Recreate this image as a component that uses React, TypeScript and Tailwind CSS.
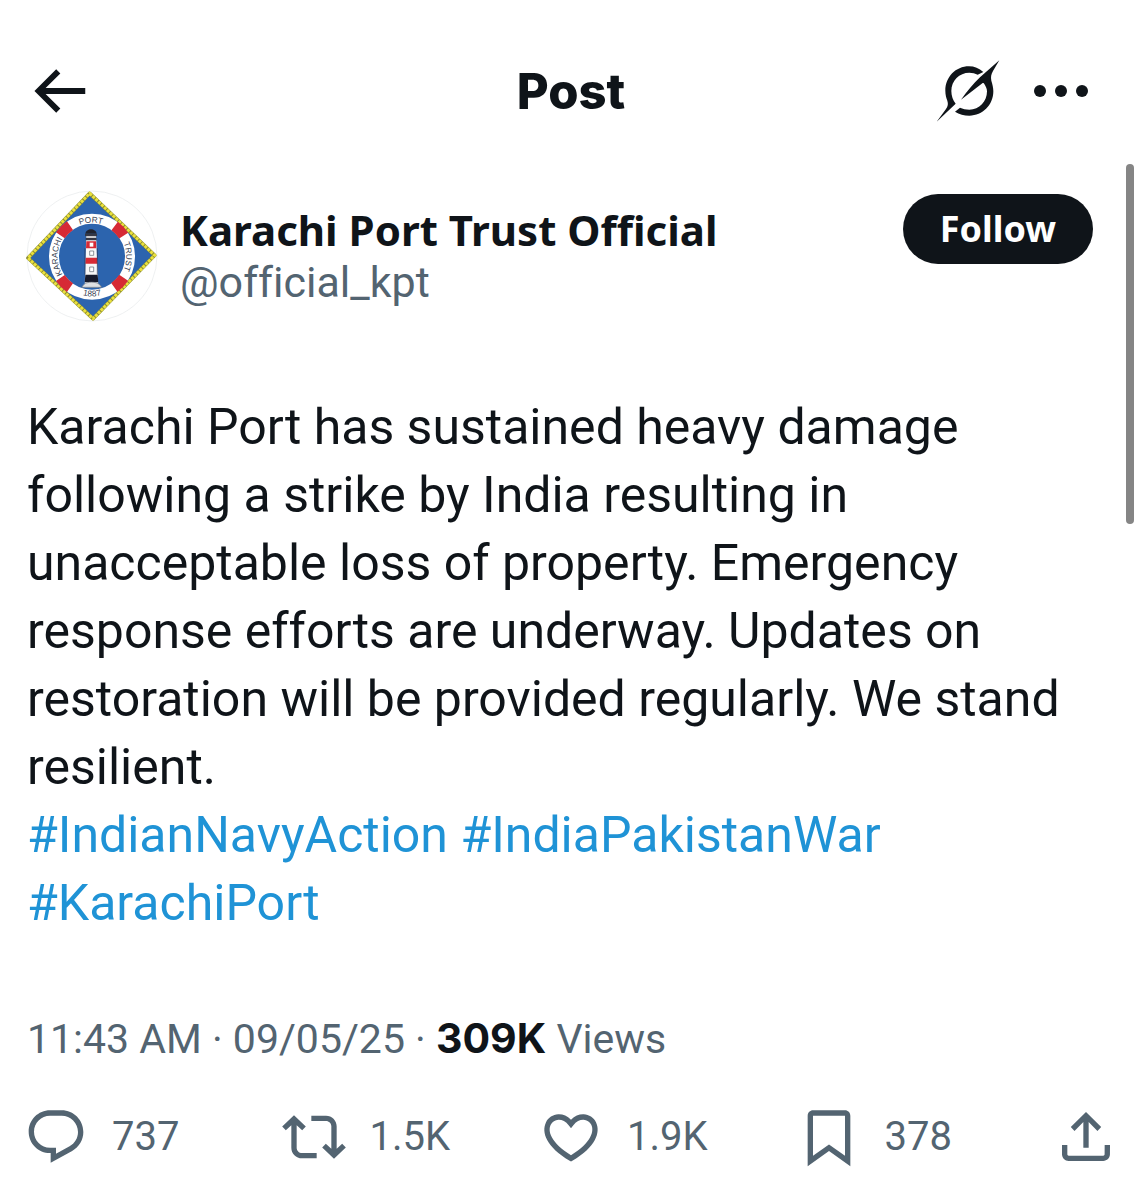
import type { ReactNode } from "react";

const icons = {
  back: "M7.414 13l5.043 5.04-1.414 1.42L3.586 12l7.457-7.46 1.414 1.42L7.414 11H21v2H7.414z",
  reply:
    "M1.751 10c0-4.42 3.584-8 8.005-8h4.366c4.49 0 8.129 3.64 8.129 8.13 0 2.96-1.607 5.68-4.196 7.11l-8.054 4.46v-3.69h-.067c-4.49.1-8.183-3.51-8.183-8.01zm8.005-6c-3.317 0-6.005 2.69-6.005 6 0 3.37 2.77 6.08 6.138 6.01l.351-.01h1.761v2.3l5.087-2.81c1.951-1.08 3.163-3.13 3.163-5.36 0-3.39-2.744-6.13-6.129-6.13H9.756z",
  repost:
    "M4.5 3.88l4.432 4.14-1.364 1.46L5.5 7.55V16c0 1.1.896 2 2 2H13v2H7.5c-2.209 0-4-1.79-4-4V7.55L1.432 9.48.068 8.02 4.5 3.88zM16.5 6H11V4h5.5c2.209 0 4 1.79 4 4v8.45l2.068-1.93 1.364 1.46-4.432 4.14-4.432-4.14 1.364-1.46 2.068 1.93V8c0-1.1-.896-2-2-2z",
  like: "M16.697 5.5c-1.222-.06-2.679.51-3.89 2.16l-.805 1.09-.806-1.09C9.984 6.01 8.526 5.44 7.304 5.5c-1.243.07-2.349.78-2.91 1.91-.552 1.12-.633 2.78.479 4.82 1.074 1.97 3.257 4.27 7.129 6.61 3.87-2.34 6.052-4.64 7.126-6.61 1.111-2.04 1.03-3.7.477-4.82-.561-1.13-1.666-1.84-2.908-1.91zm4.187 7.69c-1.351 2.48-4.001 5.12-8.379 7.67l-.503.3-.504-.3c-4.379-2.55-7.029-5.19-8.382-7.67-1.36-2.5-1.41-4.86-.514-6.67.887-1.79 2.647-2.91 4.601-3.01 1.651-.09 3.368.56 4.798 2.01 1.429-1.45 3.146-2.1 4.796-2.01 1.954.1 3.714 1.22 4.601 3.01.896 1.81.846 4.17-.514 6.67z",
  bookmark:
    "M4 4c0-1.1.9-2 2-2h12c1.1 0 2 .9 2 2v18.94l-8-5.71-8 5.71V4zM6 4v15.06l6-4.29 6 4.29V4H6z",
  share:
    "M12 2.59l5.7 5.7-1.41 1.42L13 6.41V16h-2V6.41l-3.3 3.3-1.41-1.42L12 2.59zM21 15l-.02 3.51c0 1.38-1.12 2.49-2.5 2.49H5.5C4.11 21 3 19.88 3 18.5V15h2v3.5c0 .28.22.5.5.5h12.98c.28 0 .5-.22.5-.5L19 15h2z",
};

const actions = [
  { label: "Reply", icon: icons.reply, count: "737" },
  { label: "Repost", icon: icons.repost, count: "1.5K" },
  { label: "Like", icon: icons.like, count: "1.9K" },
  { label: "Bookmark", icon: icons.bookmark, count: "378" },
];

const hashtags = ["#IndianNavyAction", "#IndiaPakistanWar", "#KarachiPort"];

function Icon({ path, className }: { path: string; className: string }) {
  return (
    <svg viewBox="0 0 24 24" fill="currentColor" className={className} aria-hidden="true">
      <path d={path} />
    </svg>
  );
}

function GrokIcon() {
  return (
    <svg viewBox="48 26 192 192" fill="currentColor" className="size-16" aria-hidden="true">
      <path d="M190 65C177 54 163 48 147 48C107 48 76 80 76 121C76 134 79 143 82 151C85 160 84 167 78 176L50 214L107 160C99 150 94 137 94 122C94 91 118 67 148 67C157 67 166 69 173 73Z" />
      <path d="M238 30L180 81C160 101 141 122 123 148L188 98C190 97 192 98 193 101C197 108 201 114 201 123C201 154 178 178 148 178C138 178 128 175 120 172L105 184C118 192 132 196 148 196C188 196 220 164 220 123C220 112 217 101 214 91C212 80 213 73 219 62Z" />
    </svg>
  );
}

function Avatar() {
  return (
    <svg viewBox="30 30 396 396" className="size-[132px] shrink-0" role="img" aria-label="Karachi Port Trust">
      <defs>
        <path id="arc-top" d="M126 230A102 102 0 0 1 330 230" />
        <path id="arc-left" d="M228 333A103 103 0 0 1 228 127" />
        <path id="arc-right" d="M228 127A103 103 0 0 1 228 333" />
        <path id="arc-bottom" d="M109 230A119 119 0 0 0 347 230" />
      </defs>
      <circle cx="228" cy="228" r="195" fill="#fff" stroke="#e6e8ea" strokeWidth="2" />
      <path d="M221 40L416 226L231 416L36 234Z" fill="#2c64ae" stroke="#8a8a35" strokeWidth="11" strokeLinejoin="round" />
      <path d="M221 40L416 226L231 416L36 234Z" fill="none" stroke="#e9e03c" strokeWidth="9" strokeDasharray="9 3" />
      <circle cx="228" cy="230" r="114" fill="none" stroke="#fff" strokeWidth="30" />
      <g fill="none" stroke="#d62a35" strokeWidth="32">
        <path d="M133 166A114 114 0 0 1 162 137" />
        <path d="M296 138A114 114 0 0 1 323 167" />
        <path d="M323 293A114 114 0 0 1 295 322" />
        <path d="M162 323A114 114 0 0 1 133 294" />
      </g>
      <g fill="#384151" className="font-['Liberation_Sans',sans-serif] text-[25px]" textAnchor="middle">
        <text>
          <textPath href="#arc-top" startOffset="49%">PORT</textPath>
        </text>
        <text>
          <textPath href="#arc-left" startOffset="50%">KARACHI</textPath>
        </text>
        <text>
          <textPath href="#arc-right" startOffset="50%">TRUST</textPath>
        </text>
        <text>
          <textPath href="#arc-bottom" startOffset="50%">1887</textPath>
        </text>
      </g>
      <path d="M206 322L211 162H240L247 322Z" fill="#f8f8f8" />
      <path d="M208 161C210 143 240 143 242 161Z" fill="#20242f" />
      <path d="M207 161H243V169H207ZM209 173H242V181H209Z" fill="#343845" />
      <path d="M211 184H240L241 205H210ZM209 233H243L244 251H208Z" fill="#d62a35" />
      <path d="M208 284H245L247 307H206Z" fill="#171a2b" />
      <path d="M221 188H232V200H221Z" fill="#fff" />
      <path d="M221 213H233V226H221ZM221 261H233V275H221Z" fill="#fff" stroke="#59606c" strokeWidth="2" />
      <path d="M207 205V284M244 205V284" stroke="#263050" strokeWidth="2" />
      <path d="M203 314C213 304 241 304 251 314L257 322H197Z" fill="#dfe1e3" stroke="#707780" strokeWidth="2" />
    </svg>
  );
}

function Hashtag({ children }: { children: ReactNode }) {
  return (
    <a href="#hashtag" className="text-[#1f93d6]">
      {children}
    </a>
  );
}

export default function App() {
  return (
    <div className="relative min-h-screen bg-white font-[Roboto,sans-serif] text-[#0f1419] [font-variant-ligatures:none]">
      <header className="grid grid-cols-[1fr_auto_1fr] items-center pt-14 pr-5 pl-6">
        <button aria-label="Back" className="justify-self-start">
          <Icon path={icons.back} className="size-[70px]" />
        </button>
        <h1 className="font-[Inter,sans-serif] text-[49px] leading-none font-extrabold">Post</h1>
        <div className="flex items-center justify-self-end">
          <button aria-label="Explain this post">
            <GrokIcon />
          </button>
          <button aria-label="More" className="ml-[34px] pr-[30px]">
            <svg viewBox="0 0 54 12" fill="currentColor" className="h-3 w-[54px]" aria-hidden="true">
              <circle cx="6" cy="6" r="6" />
              <circle cx="27" cy="6" r="6" />
              <circle cx="48" cy="6" r="6" />
            </svg>
          </button>
        </div>
      </header>

      <main className="pt-16">
        <article>
          <div className="flex items-start pr-[45px] pl-[26px]">
            <Avatar />
            <div className="min-w-0 flex-1 pt-[14px] pl-[22px] leading-[52px]">
              <h2 className="font-['Noto_Sans',sans-serif] text-[42px] font-bold">Karachi Port Trust Official</h2>
              <p className="text-[43px] text-[#536471]">@official_kpt</p>
            </div>
            <button className="mt-1 h-[70px] w-[190px] shrink-0 rounded-full bg-[#0f1419] font-['Noto_Sans',sans-serif] text-[36px] font-bold text-white">
              Follow
            </button>
          </div>

          <div className="pt-[71px] pr-10 pl-[27px] text-[50px] leading-[68px]">
            <p>
              Karachi Port has sustained heavy damage following a strike by India resulting in unacceptable loss of
              property. Emergency response efforts are underway. Updates on restoration will be provided regularly. We
              stand resilient.
            </p>
            <p>
              {hashtags.map((tag) => (
                <span key={tag}>
                  <Hashtag>{tag}</Hashtag>{" "}
                </span>
              ))}
            </p>
          </div>

          <p className="pt-[75px] pl-[27px] text-[41px] leading-[52px] text-[#536471]">
            11:43 AM · 09/05/25 · <strong className="font-[Inter,sans-serif] font-bold text-[#0f1419]">309K</strong>{" "}
            Views
          </p>

          <div className="flex pt-10 pr-5 pl-6 text-[40px] leading-none text-[#536471]">
            {actions.map((action) => (
              <button key={action.label} aria-label={action.label} className="flex flex-1 items-center gap-6">
                <Icon path={action.icon} className="size-16" />
                <span>{action.count}</span>
              </button>
            ))}
            <button aria-label="Share">
              <Icon path={icons.share} className="size-16" />
            </button>
          </div>
        </article>
      </main>

      {/* scroll position thumb */}
      <div className="absolute top-[164px] right-1 h-[360px] w-2 rounded-full bg-[#858585]" />
    </div>
  );
}
